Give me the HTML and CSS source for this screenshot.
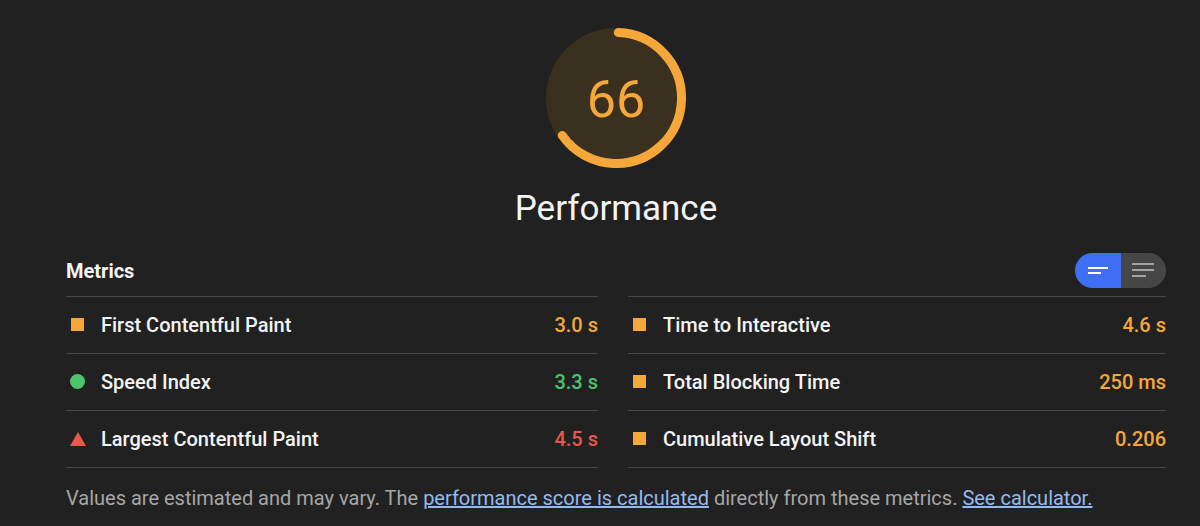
FILE: index.html
```html
<!DOCTYPE html>
<html>
<head>
<meta charset="utf-8">
<link rel="stylesheet" href="styles.css">
</head>
<body>
<div class="page">
  <div class="gauge-wrap">
    <svg class="gauge" width="140" height="140" viewBox="0 0 140 140">
      <circle cx="70" cy="70" r="70" fill="#3a301f"/>
      <circle cx="70" cy="70" r="65.5" fill="none" stroke="#f5a73a" stroke-width="9" stroke-linecap="round" stroke-dasharray="266 500" transform="rotate(-88 70 70)"/>
      <text x="70" y="89" text-anchor="middle" class="score">66</text>
    </svg>
    <div class="gauge-label">Performance</div>
  </div>

  <div class="metrics-header">
    <div class="metrics-title">Metrics</div>
    <div class="toggle">
      <div class="toggle-half on">
        <svg width="24" height="12" viewBox="0 0 24 12"><rect x="2" y="2" width="20" height="2" fill="#fff"/><rect x="2" y="7" width="13" height="2" fill="#fff"/></svg>
      </div>
      <div class="toggle-half off">
        <svg width="26" height="18" viewBox="0 0 26 18"><rect x="2" y="1" width="22" height="2" fill="#a3a3a3"/><rect x="2" y="7" width="22" height="2" fill="#a3a3a3"/><rect x="2" y="13" width="14" height="2" fill="#a3a3a3"/></svg>
      </div>
    </div>
  </div>

  <div class="metrics">
    <div class="col">
      <div class="row"><span class="ico sq"></span><span class="name">First Contentful Paint</span><span class="val avg">3.0 s</span></div>
      <div class="row"><span class="ico circ"></span><span class="name">Speed Index</span><span class="val pass">3.3 s</span></div>
      <div class="row"><span class="ico tri"></span><span class="name">Largest Contentful Paint</span><span class="val fail">4.5 s</span></div>
    </div>
    <div class="col">
      <div class="row"><span class="ico sq"></span><span class="name">Time to Interactive</span><span class="val avg">4.6 s</span></div>
      <div class="row"><span class="ico sq"></span><span class="name">Total Blocking Time</span><span class="val avg">250 ms</span></div>
      <div class="row"><span class="ico sq"></span><span class="name">Cumulative Layout Shift</span><span class="val avg">0.206</span></div>
    </div>
  </div>

  <p class="note">Values are estimated and may vary. The <a href="#">performance score is calculated</a> directly from these metrics. <a href="#">See calculator.</a></p>
</div>
</body>
</html>
```

FILE: styles.css
```css
html, body {
  margin: 0;
  padding: 0;
  background: #212121;
  height: 100%;
}
body {
  font-family: Roboto, "Liberation Sans", sans-serif;
  color: #f2f2f2;
  overflow: hidden;
}
.page {
  width: 1100px;
  padding: 28px 0 0 66px;
}
.gauge-wrap {
  display: flex;
  flex-direction: column;
  align-items: center;
}
.gauge {
  display: block;
}
.score {
  font-family: Roboto, "Liberation Sans", sans-serif;
  font-size: 52px;
  fill: #f5a73a;
}
.gauge-label {
  margin-top: 21px;
  font-size: 35px;
  line-height: 40px;
  color: #f4f4f4;
}
.metrics-header {
  display: flex;
  justify-content: space-between;
  align-items: center;
  height: 35px;
  margin-top: 24px;
  margin-bottom: 8px;
}
.metrics-title {
  font-size: 20px;
  font-weight: 700;
  color: #f4f4f4;
}
.toggle {
  display: flex;
  width: 91px;
  height: 35px;
  border-radius: 18px;
  overflow: hidden;
}
.toggle-half {
  flex: 1;
  display: flex;
  align-items: center;
  justify-content: center;
}
.toggle-half.on {
  background: #3d6ef4;
}
.toggle-half.off {
  background: #464646;
}
.toggle-half svg {
  display: block;
}
.metrics {
  display: grid;
  grid-template-columns: 532px 538px;
  column-gap: 30px;
}
.row {
  display: flex;
  align-items: center;
  height: 57px;
  border-top: 1px solid #474747;
  box-sizing: border-box;
}
.row:last-child {
  border-bottom: 1px solid #474747;
  height: 58px;
}
.ico {
  width: 16px;
  height: 16px;
  margin-left: 4px;
  margin-right: 15px;
  flex: none;
  position: relative;
}
.ico.sq::before {
  content: "";
  position: absolute;
  left: 1px;
  top: 1px;
  width: 13px;
  height: 13px;
  background: #f5a73a;
}
.ico.circ::before {
  content: "";
  position: absolute;
  left: 0;
  top: 0;
  width: 15px;
  height: 15px;
  border-radius: 50%;
  background: #4ec36c;
}
.ico.tri::before {
  content: "";
  position: absolute;
  left: 0;
  top: 1px;
  width: 0;
  height: 0;
  border-left: 8px solid transparent;
  border-right: 8px solid transparent;
  border-bottom: 14px solid #e8584b;
}
.name {
  flex: 1;
  font-size: 20px;
  font-weight: 500;
  color: #f4f4f4;
}
.val {
  font-size: 20px;
  font-weight: 500;
}
.val.avg { color: #f5a73a; }
.val.pass { color: #4ec36c; }
.val.fail { color: #e8584b; }
.note {
  margin: 18px 0 0;
  font-size: 20px;
  line-height: 24px;
  color: #a6a6a6;
  white-space: nowrap;
}
.note a {
  color: #94baf2;
  text-decoration: underline;
}
```
